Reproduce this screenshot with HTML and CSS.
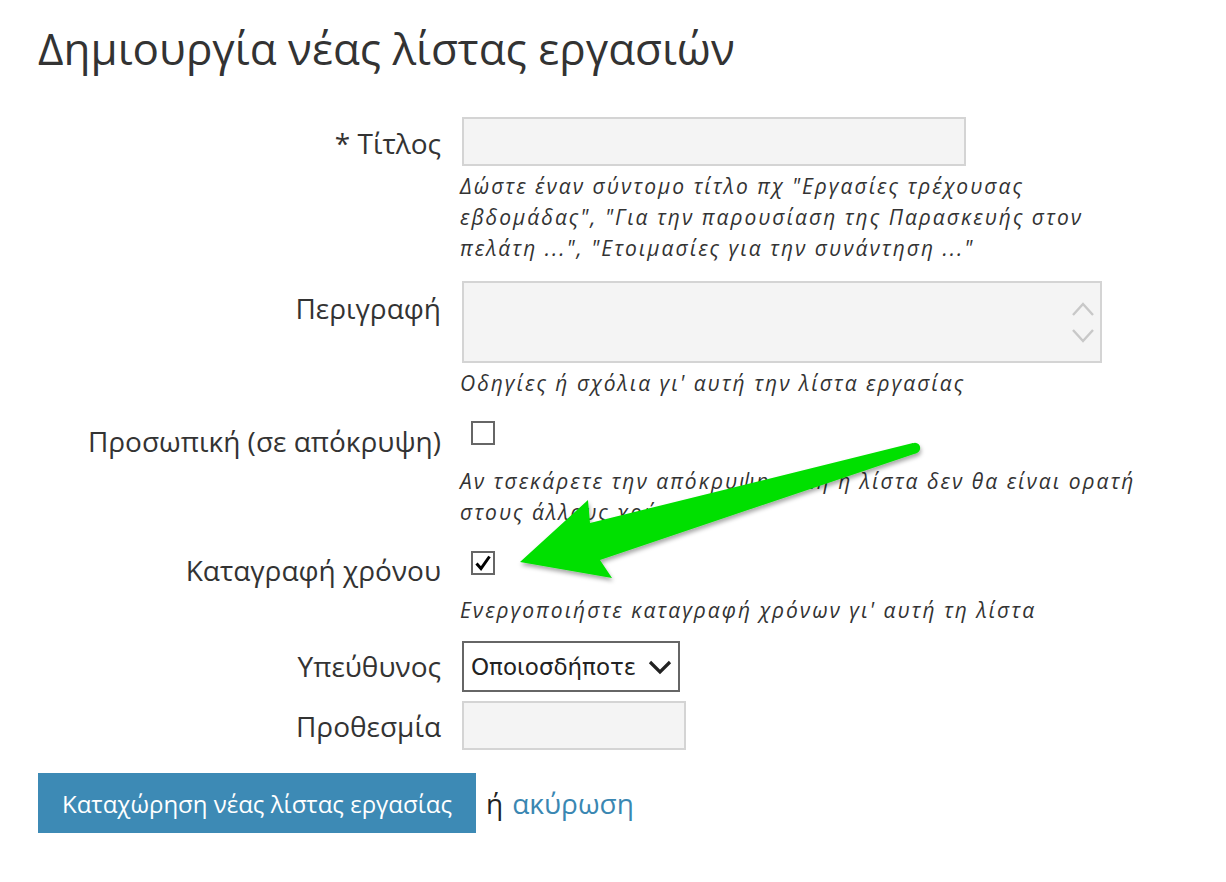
FILE: index.html
```html
<!DOCTYPE html>
<html lang="el">
<head>
<meta charset="utf-8">
<title>Δημιουργία νέας λίστας εργασιών</title>
<link rel="stylesheet" href="styles.css">
</head>
<body>
<div class="page">
  <h1 class="title">Δημιουργία νέας λίστας εργασιών</h1>
  <form class="form">
    <div class="row row-title">
      <label class="label">* Τίτλος</label>
      <div class="field">
        <div class="input input-title"></div>
        <p class="hint">Δώστε έναν σύντομο τίτλο πχ "Εργασίες τρέχουσας εβδομάδας", "Για την παρουσίαση της Παρασκευής στον πελάτη ...", "Ετοιμασίες για την συνάντηση ..."</p>
      </div>
    </div>
    <div class="row row-desc">
      <label class="label">Περιγραφή</label>
      <div class="field">
        <div class="input textarea">
          <svg class="spin" width="30" height="62" viewBox="0 0 30 62">
            <path d="M5 24 L15 13 L25 24" fill="none" stroke="#c8c8c8" stroke-width="2.4"/>
            <path d="M5 39 L15 50 L25 39" fill="none" stroke="#c8c8c8" stroke-width="2.4"/>
          </svg>
        </div>
        <p class="hint">Οδηγίες ή σχόλια γι' αυτή την λίστα εργασίας</p>
      </div>
    </div>
    <div class="row row-private">
      <label class="label">Προσωπική (σε απόκρυψη)</label>
      <div class="field">
        <div class="checkbox"></div>
        <p class="hint">Αν τσεκάρετε την απόκρυψη αυτή η λίστα δεν θα είναι ορατή στους άλλους χρήστες</p>
      </div>
    </div>
    <div class="row row-time">
      <label class="label">Καταγραφή χρόνου</label>
      <div class="field">
        <div class="checkbox">
          <svg width="20" height="20" viewBox="0 0 20 20"><path d="M3.5 10.5 L8 15.5 L16.5 3.5" fill="none" stroke="#000" stroke-width="3"/></svg>
        </div>
        <p class="hint">Ενεργοποιήστε καταγραφή χρόνων γι' αυτή τη λίστα</p>
      </div>
    </div>
    <div class="row row-owner">
      <label class="label">Υπεύθυνος</label>
      <div class="field">
        <div class="select">
          <span class="select-text">Οποιοσδήποτε</span>
          <svg width="24" height="16" viewBox="0 0 24 16"><path d="M2 3 L12 13 L22 3" fill="none" stroke="#222" stroke-width="3.2"/></svg>
        </div>
      </div>
    </div>
    <div class="row row-deadline">
      <label class="label">Προθεσμία</label>
      <div class="field">
        <div class="input input-date"></div>
      </div>
    </div>
    <div class="actions">
      <button type="button" class="btn">Καταχώρηση νέας λίστας εργασίας</button>
      <span class="or">ή</span>
      <a class="cancel" href="#">ακύρωση</a>
    </div>
  </form>
  <svg class="arrow" width="1226" height="882" viewBox="0 0 1226 882">
    <defs>
      <filter id="sh" x="-10%" y="-20%" width="120%" height="140%">
        <feDropShadow dx="1" dy="3" stdDeviation="2" flood-color="#000" flood-opacity="0.35"/>
      </filter>
    </defs>
    <g filter="url(#sh)" fill="#00e000">
      <polygon points="913,443 590,523 588,500 520,562 612,578 600,560 917,453"/>
      <circle cx="915" cy="448" r="5.2"/>
    </g>
  </svg>
</div>
</body>
</html>
```
FILE: styles.css
```css
html, body {
  margin: 0;
  padding: 0;
  background: #fff;
}
body {
  font-family: "Open Sans", "Noto Sans", sans-serif;
  color: #333;
}
.page {
  position: relative;
  width: 1226px;
  height: 882px;
  padding: 18px 0 0 38px;
  box-sizing: border-box;
}
.title {
  margin: 0;
  font-size: 44px;
  font-weight: 400;
  line-height: 60px;
  color: #333;
}
.form {
  margin-top: 39px;
}
.row {
  display: grid;
  grid-template-columns: 403px 1fr;
  column-gap: 21px;
}
.label {
  text-align: right;
  font-size: 28px;
  line-height: 38px;
  color: #333;
  white-space: nowrap;
}
.field {
  display: flex;
  flex-direction: column;
  align-items: flex-start;
}
.hint {
  margin: 5px 0 0 -2px;
  font-family: "Open Sans", sans-serif;
  font-size: 21px;
  letter-spacing: 2px;
  font-style: italic;
  line-height: 31px;
  width: 705px;
  color: #333;
}
.input {
  background: #f4f4f4;
  border: 2px solid #d4d4d4;
  box-sizing: border-box;
}
.input-title {
  width: 504px;
  height: 49px;
}
.row-title .label { padding-top: 7px; }
.row-desc { margin-top: 17px; }
.textarea {
  width: 640px;
  height: 82px;
  display: flex;
  justify-content: flex-end;
  align-items: center;
  padding-right: 2px;
}
.row-desc .label { padding-top: 8px; }
.row-desc .hint { margin-top: 5px; }
.row-private { margin-top: 22px; }
.checkbox {
  width: 24px;
  height: 24px;
  box-sizing: border-box;
  border: 2px solid #666;
  background: #fff;
  margin-left: 9px;
  display: flex;
  align-items: center;
  justify-content: center;
}
.row-private .label { padding-top: 1px; }
.row-private .hint { margin-top: 21px; }
.row-time { margin-top: 23px; }
.row-time .label { padding-top: 0; }
.row-time .hint { margin-top: 20px; }
.row-owner { margin-top: 15px; }
.select {
  width: 218px;
  height: 51px;
  box-sizing: border-box;
  border: 2px solid #666;
  background: #fff;
  display: flex;
  align-items: center;
  justify-content: space-between;
  padding: 0 6px 0 7px;
}
.select-text {
  font-family: "DejaVu Sans", sans-serif;
  font-size: 23px;
  color: #222;
}
.row-owner .label { padding-top: 6px; }
.row-deadline { margin-top: 9px; }
.input-date {
  width: 224px;
  height: 49px;
}
.row-deadline .label { padding-top: 6px; }
.actions {
  margin-top: 23px;
  display: flex;
  align-items: center;
}
.btn {
  height: 60px;
  width: 438px;
  background: #3d8ab5;
  border: none;
  color: #fff;
  font-family: "Open Sans", sans-serif;
  font-size: 24px;
  padding: 0;
}
.or {
  margin-left: 10px;
  font-size: 28px;
  color: #222;
}
.cancel {
  margin-left: 9px;
  font-size: 28px;
  color: #3a87b2;
  text-decoration: none;
}
.arrow {
  position: absolute;
  left: 0;
  top: 0;
  pointer-events: none;
}
```
